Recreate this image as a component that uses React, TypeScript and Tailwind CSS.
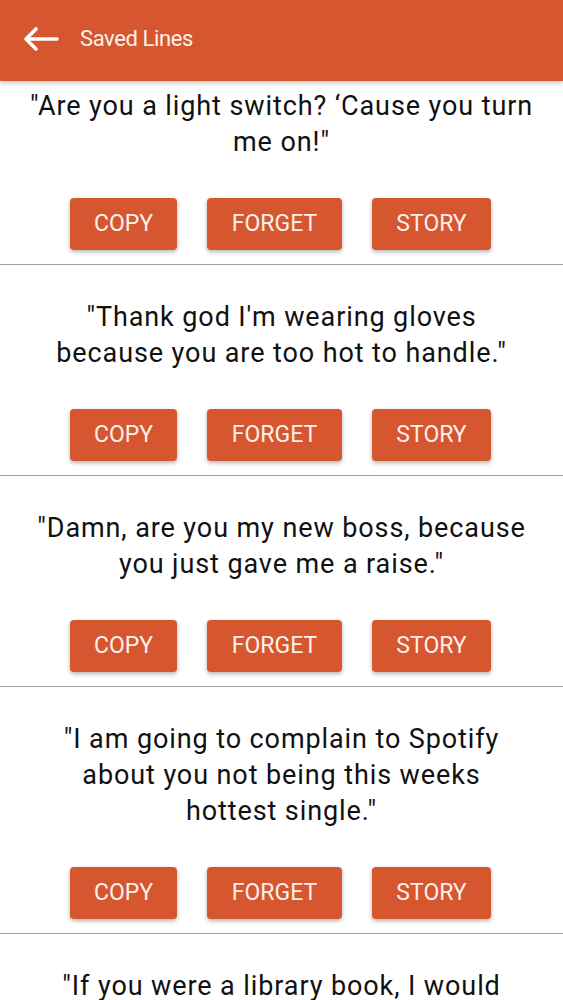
type Line = {
  id: number;
  lines: string[];
};

const savedLines: Line[] = [
  { id: 1, lines: ['"Are you a light switch? ‘Cause you turn', 'me on!"'] },
  {
    id: 2,
    lines: ['"Thank god I\'m wearing gloves', 'because you are too hot to handle."'],
  },
  {
    id: 3,
    lines: ['"Damn, are you my new boss, because', 'you just gave me a raise."'],
  },
  {
    id: 4,
    lines: [
      '"I am going to complain to Spotify',
      "about you not being this weeks",
      'hottest single."',
    ],
  },
  {
    id: 5,
    lines: ['"If you were a library book, I would', 'check you out."'],
  },
];

const font = { fontFamily: "Roboto, 'Liberation Sans', sans-serif" };

const ActionButton = ({ label, width }: { label: string; width: string }) => (
  <button
    className={`${width} h-[52px] rounded-[4px] bg-[#d6562f] text-[23px] text-[#fdf1ec] shadow-[0_2px_4px_rgba(0,0,0,0.3)]`}
  >
    {label}
  </button>
);

const App = () => {
  return (
    <div className="h-[1000px] overflow-hidden bg-white" style={font}>
      <div className="relative z-10 flex h-[81px] items-center bg-[#d6562f] pb-[4px] shadow-[0_2px_5px_rgba(0,0,0,0.25)]">
        <svg
          width="36"
          height="26"
          viewBox="0 0 36 26"
          fill="none"
          stroke="white"
          strokeWidth="3.6"
          strokeLinecap="round"
          strokeLinejoin="round"
          className="ml-[23px]"
        >
          <path d="M34 13H3M13 3L3 13l10 10" />
        </svg>
        <span className="ml-[21px] text-[22px] tracking-[-0.4px] text-[#fdf1ec]">
          Saved Lines
        </span>
      </div>
      <div>
        {savedLines.map((item, i) => (
          <div
            key={item.id}
            className={
              i === 0
                ? "border-b border-[#a3a3a3] pt-[7px]"
                : "border-b border-[#a3a3a3] pt-[34px]"
            }
          >
            <p className="text-center text-[27px] leading-[36px] tracking-[0.9px] text-[#111]">
              {item.lines.map((l, j) => (
                <span key={j} className="block whitespace-nowrap">
                  {l}
                </span>
              ))}
            </p>
            <div className="mt-[38px] mb-[14px] flex justify-center gap-[30px] pr-[2px]">
              <ActionButton label="COPY" width="w-[107px]" />
              <ActionButton label="FORGET" width="w-[135px]" />
              <ActionButton label="STORY" width="w-[119px]" />
            </div>
          </div>
        ))}
      </div>
    </div>
  );
};

export default App;
